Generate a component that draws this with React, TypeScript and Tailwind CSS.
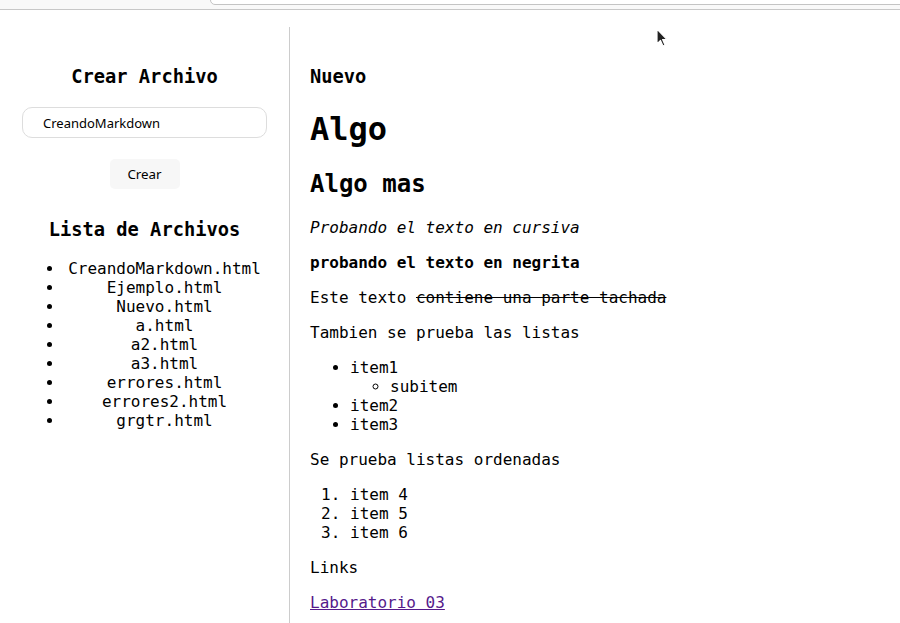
import React from "react";

function Cursor() {
  return (
    <svg
      className="absolute left-[654px] top-[27px]"
      width="14"
      height="22"
      viewBox="0 0 14 22"
    >
      <path
        d="M3 2 L3 17 L6.5 13.5 L9 19 L11 18 L8.6 12.6 L13 12.6 Z"
        fill="#222"
        stroke="#fff"
        strokeWidth="1.2"
        strokeLinejoin="round"
      />
    </svg>
  );
}

export default function App() {
  const files = [
    "CreandoMarkdown.html",
    "Ejemplo.html",
    "Nuevo.html",
    "a.html",
    "a2.html",
    "a3.html",
    "errores.html",
    "errores2.html",
    "grgtr.html",
  ];
  return (
    <div
      className="relative w-[900px] h-[623px] overflow-hidden bg-white text-black leading-[normal]"
      style={{ fontFamily: '"DejaVu Sans Mono", monospace' }}
    >
      {/* browser chrome strip */}
      <div className="h-[10px] bg-[#f9f9f9] border-b border-[#c8c8c8] relative">
        <div className="absolute left-[210px] top-[-6px] right-[-10px] h-[11px] bg-white border border-[#c4c4c4] rounded-[5px]" />
      </div>

      <div className="flex mt-[17px] h-[596px]">
        {/* left column */}
        <div className="w-[290px] border-r border-[#cccccc] pt-[20px] text-center flex flex-col items-center">
          <h3 className="text-[18.72px] font-bold my-[18.72px]">Crear Archivo</h3>
          <input
            readOnly
            value="CreandoMarkdown"
            className="mt-[2px] w-[245px] h-[31px] border border-[#dddddd] rounded-[10px] pl-[20px] text-[13px] text-black outline-none"
            style={{ fontFamily: '"Noto Sans", sans-serif' }}
          />
          <button
            className="mt-[21px] mb-[11px] w-[70px] h-[30px] bg-[#f7f7f7] rounded-[5px] text-[13.33px] text-black"
            style={{ fontFamily: '"Noto Sans", sans-serif' }}
          >
            Crear
          </button>
          <h3 className="text-[18.72px] font-bold my-[18.72px]">Lista de Archivos</h3>
          <ul className="list-disc pl-[64px] pr-[24px] w-full text-[16px]">
            {files.map((f) => (
              <li key={f} className="text-center">
                {f}
              </li>
            ))}
          </ul>
        </div>

        {/* right column */}
        <div className="flex-1 pl-[20px] pt-[20px] text-[16px]">
          <h3 className="text-[18.72px] font-bold my-[18.72px]">Nuevo</h3>
          <h1 className="text-[32px] font-bold mt-[23.44px] mb-[21.44px]">Algo</h1>
          <h2 className="text-[24px] font-bold my-[19.92px]">Algo mas</h2>
          <p className="my-4 italic">Probando el texto en cursiva</p>
          <p className="my-4 font-bold">probando el texto en negrita</p>
          <p className="my-4">
            Este texto <span className="line-through">contiene una parte tachada</span>
          </p>
          <p className="my-4">Tambien se prueba las listas</p>
          <ul className="list-disc pl-10 my-4">
            <li>
              item1
              <ul className="list-[circle] pl-10">
                <li>subitem</li>
              </ul>
            </li>
            <li>item2</li>
            <li>item3</li>
          </ul>
          <p className="my-4">Se prueba listas ordenadas</p>
          <ol className="list-decimal pl-10 my-4">
            <li>item 4</li>
            <li>item 5</li>
            <li>item 6</li>
          </ol>
          <p className="my-4">Links</p>
          <p className="my-4">
            <a href="#" className="underline text-[#551a8b]">
              Laboratorio 03
            </a>
          </p>
        </div>
      </div>
      <Cursor />
    </div>
  );
}
